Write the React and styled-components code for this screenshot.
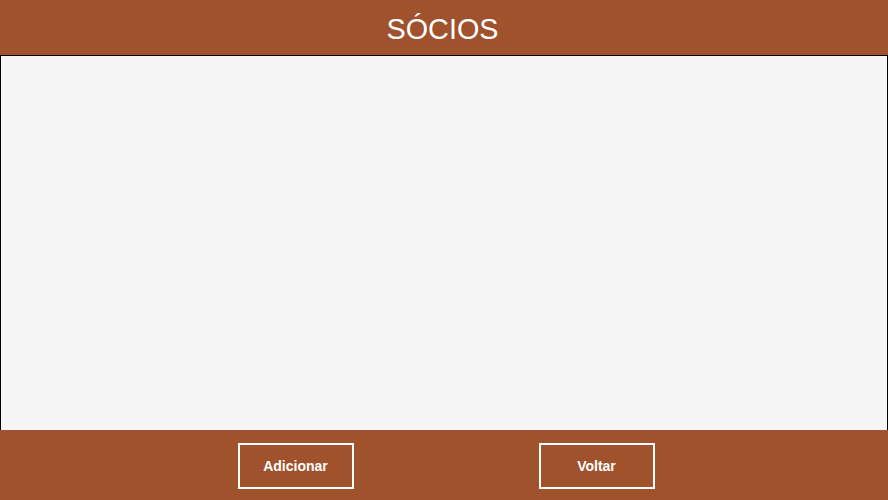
import styled, { createGlobalStyle } from "styled-components";

const GlobalStyle = createGlobalStyle`
  html, body {
    margin: 0;
    padding: 0;
    height: 100%;
  }
  body {
    font-family: "Liberation Sans", Arial, sans-serif;
    background: #f5f5f5;
  }
  #root {
    height: 100%;
  }
`;

const Screen = styled.div`
  display: flex;
  flex-direction: column;
  height: 500px;
  width: 100%;
`;

const Header = styled.header`
  height: 55px;
  flex-shrink: 0;
  display: flex;
  align-items: center;
  justify-content: center;
  background-color: #a0522d;
`;

const Title = styled.h1`
  margin: 0;
  padding-top: 4px;
  padding-right: 3px;
  font-size: 28.8px;
  font-weight: 400;
  color: #fff;
`;

const Content = styled.main`
  flex: 1;
  background-color: #f5f5f5;
  border: 1px solid #000;
  border-bottom: none;
`;

const Footer = styled.footer`
  height: 70px;
  box-sizing: border-box;
  flex-shrink: 0;
  display: flex;
  align-items: center;
  justify-content: center;
  gap: 185px;
  padding: 2px 0 0 4px;
  background-color: #a0522d;
`;

const Button = styled.button`
  width: 116px;
  height: 46px;
  border: 2px solid #fff;
  background: transparent;
  color: #fff;
  font-family: "Liberation Sans", Arial, sans-serif;
  font-size: 14px;
  font-weight: 700;
  cursor: pointer;
`;

export default function App() {
  return (
    <>
      <GlobalStyle />
      <Screen>
        <Header>
          <Title>SÓCIOS</Title>
        </Header>
        <Content />
        <Footer>
          <Button>Adicionar</Button>
          <Button>Voltar</Button>
        </Footer>
      </Screen>
    </>
  );
}
